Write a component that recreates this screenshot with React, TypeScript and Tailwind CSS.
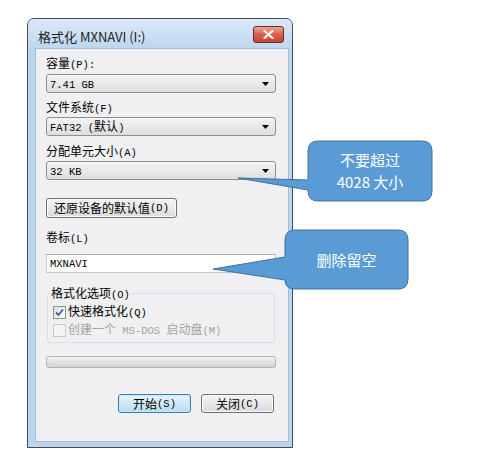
import React from 'react'

const CJK = "font-['Noto_Sans_CJK_SC',sans-serif]"
const MONO = "font-['Liberation_Mono','Noto_Sans_CJK_SC',monospace] text-[10.5px]"

// ASCII runs are narrow like SimSun's half-width glyphs
function T({ s }: { s: string }) {
  const parts = s.split(/([\x20-\x7e]+)/)
  return (
    <>
      {parts.map((p, i) =>
        /^[\x20-\x7e]+$/.test(p) ? (
          <span key={i} className={MONO}>
            {p}
          </span>
        ) : (
          <span key={i}>{p}</span>
        )
      )}
    </>
  )
}

function Combo({ value }: { value: string }) {
  return (
    <div className="flex h-[19px] w-[230px] items-center justify-between rounded-[3px] border border-[#8f8f8f] bg-linear-to-b from-[#f4f4f4] to-[#dedede] pl-[3px] pr-[6px]">
      <span className="whitespace-pre leading-[14px]">
        <T s={value} />
      </span>
      <svg width="7" height="4" viewBox="0 0 7 4">
        <path d="M0 0h7L3.5 4z" fill="#000" />
      </svg>
    </div>
  )
}

function Label({ text, className = '' }: { text: string; className?: string }) {
  return (
    <div className={`h-[14px] leading-[14px] whitespace-pre ${className}`}>
      <T s={text} />
    </div>
  )
}

function Button({ text, primary = false, className = '' }: { text: string; primary?: boolean; className?: string }) {
  return (
    <div
      className={`flex h-[19px] items-center justify-center rounded-[3px] border leading-[14px] whitespace-pre ${
        primary
          ? 'border-[#3c7fb1] bg-linear-to-b from-[#e9f5fc] to-[#b7dbf1] shadow-[inset_0_0_0_1px_#c6e6f8]'
          : 'border-[#707070] bg-linear-to-b from-[#f3f3f3] to-[#dcdcdc] shadow-[inset_0_0_0_1px_#fbfbfb]'
      } ${className}`}
    >
      <T s={text} />
    </div>
  )
}

function Check({ checked, disabled }: { checked?: boolean; disabled?: boolean }) {
  return (
    <div
      className={`flex h-[13px] w-[13px] items-center justify-center border ${
        disabled ? 'border-[#c9c9c9] bg-[#f4f4f4]' : 'border-[#8e8f8f] bg-linear-to-br from-[#dcdcdc] to-[#ffffff]'
      }`}
    >
      {checked && (
        <svg width="9" height="9" viewBox="0 0 9 9">
          <path d="M1 4.5 L3.5 7 L8 1.5" stroke="#3d5ea3" strokeWidth="1.8" fill="none" />
        </svg>
      )}
    </div>
  )
}

export default function App() {
  return (
    <div className={`relative h-[464px] w-[490px] overflow-hidden bg-white pl-[27px] pt-[18px] text-[12px] text-black ${CJK}`}>
      {/* Window */}
      <div className="flex h-[430px] w-[266px] flex-col rounded-t-[7px] border border-[#4a4a4a] bg-[#bcd5ef]">
        {/* Title bar */}
        <div className="flex h-[29px] items-start justify-between rounded-t-[6px] bg-linear-to-b from-[#dbe9f8] to-[#bfd6f0] pl-[10px] pr-[8px]">
          <div className="mt-[10px] text-[13px] leading-[16px] text-[#1e1e1e]">格式化 MXNAVI (I:)</div>
          <div className="mt-[7px] flex h-[17px] w-[31px] items-center justify-center rounded-[3px] border border-[#6b2d27] bg-linear-to-b from-[#e9a597] via-[#d6604f] to-[#c8453a]">
            <svg width="11" height="9" viewBox="0 0 11 9">
              <path d="M1.5 1 L9.5 8 M9.5 1 L1.5 8" stroke="#fff" strokeWidth="2.2" strokeLinecap="round" />
            </svg>
          </div>
        </div>

        {/* Client area */}
        <div className="mb-[5px] ml-[7px] mr-[3px] flex flex-1 flex-col border border-[#a4bfdc] bg-[#f0f0f2] pl-[10px] pt-[7px]">
          <Label text="容量(P):" />
          <div className="mt-[4px]">
            <Combo value="7.41 GB" />
          </div>
          <Label text="文件系统(F)" className="mt-[7px]" />
          <div className="mt-[3px]">
            <Combo value="FAT32 (默认)" />
          </div>
          <Label text="分配单元大小(A)" className="mt-[8px]" />
          <div className="mt-[3px]">
            <Combo value="32 KB" />
          </div>
          <Button text="还原设备的默认值(D)" className="mt-[18px] h-[20px] w-[131px]" />
          <Label text="卷标(L)" className="mt-[12px]" />
          <div className="mt-[10px] flex h-[19px] w-[230px] items-center border border-[#c5c8cf] border-t-[#abadb3] bg-white pl-[3px] leading-[14px]">
            <T s="MXNAVI" />
          </div>

          <fieldset className="ml-[1px] mt-[13px] w-[228px] rounded-[3px] border border-[#d5dfe5] pb-[5px]">
            <legend className="ml-[2px] h-[14px] px-[1px] leading-[14px] whitespace-pre">
              <T s="格式化选项(O)" />
            </legend>
            <div className="mt-[5px] flex h-[14px] items-center gap-[2px] pl-[5px] leading-[14px]">
              <Check checked />
              <span className="whitespace-pre">
                <T s="快速格式化(Q)" />
              </span>
            </div>
            <div className="mt-[4px] flex h-[14px] items-center gap-[2px] pl-[5px] leading-[14px] text-[#a3a3a3]">
              <Check disabled />
              <span className="whitespace-pre">
                <T s="创建一个 MS-DOS 启动盘(M)" />
              </span>
            </div>
          </fieldset>

          <div className="mt-[13px] h-[12px] w-[230px] rounded-[3px] border border-[#b2b2b2] bg-linear-to-b from-[#f4f4f4] via-[#e2e2e2] to-[#d4d4d4]" />

          <div className="mt-[26px] flex justify-end gap-[10px] pr-[14px]">
            <Button text="开始(S)" primary className="w-[73px]" />
            <Button text="关闭(C)" className="w-[73px]" />
          </div>
        </div>
      </div>

      {/* Callouts */}
      <svg className="pointer-events-none absolute left-0 top-0" width="490" height="464">
        <path
          d="M318,141 H422 Q432,141 432,151 V191 Q432,201 422,201 H318 Q308,201 308,191 V190 L238,178 L308,180 V151 Q308,141 318,141 Z"
          fill="#5b9bd5"
          stroke="#41719c"
          strokeWidth="1"
        />
        <path
          d="M295,230 H398 Q408,230 408,240 V279 Q408,289 398,289 H295 Q285,289 285,280 L213,269 L285,257 V240 Q285,230 295,230 Z"
          fill="#5b9bd5"
          stroke="#41719c"
          strokeWidth="1"
        />
      </svg>
      <div className="absolute left-[308px] top-[141px] flex h-[60px] w-[124px] flex-col items-center justify-center text-[15px] leading-[22px] text-white">
        <div>不要超过</div>
        <div>4028 大小</div>
      </div>
      <div className="absolute left-[285px] top-[230px] flex h-[59px] w-[123px] items-center justify-center text-[15px] leading-[22px] text-white">
        删除留空
      </div>
    </div>
  )
}
